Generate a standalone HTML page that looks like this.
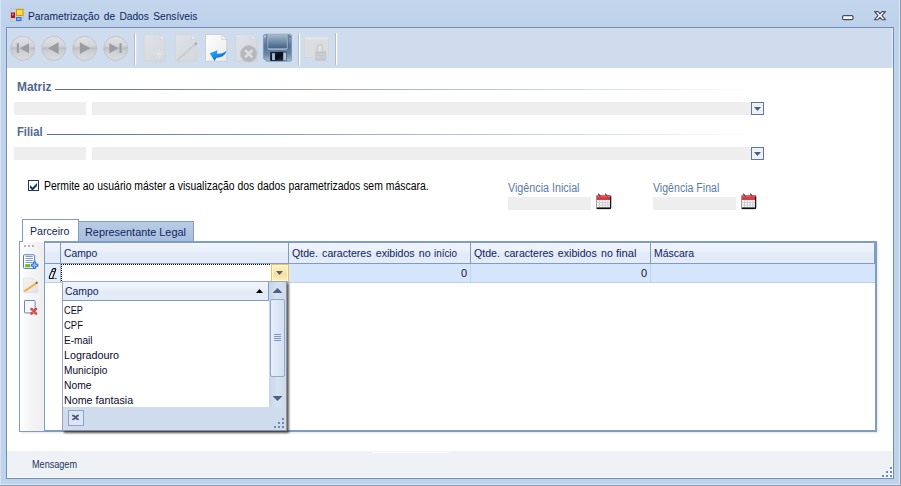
<!DOCTYPE html>
<html>
<head>
<meta charset="utf-8">
<title>Parametrização de Dados Sensíveis</title>
<style>
*{box-sizing:border-box;margin:0;padding:0}
html,body{width:901px;height:486px;overflow:hidden;background:#bfd3eb}
body{font-family:"Liberation Sans",sans-serif;font-size:11px;color:#000;position:relative}
.abs{position:absolute}
.t{position:absolute;white-space:nowrap;line-height:14px;transform-origin:0 50%}
#win{position:absolute;left:0;top:0;width:901px;height:486px;background:linear-gradient(#c3d6ed 0,#bdd1ea 27px,#bfd3eb 28px)}
#edgeL{left:0;top:0;width:1px;height:486px;background:#d6e3f4}
#edgeR1{left:899px;top:0;width:1px;height:485px;background:#d9e6f5}
#edgeR2{left:900px;top:0;width:1px;height:486px;background:#8f9bab}
#edgeB1{left:0;top:484px;width:900px;height:1px;background:#d9e6f5}
#edgeB2{left:0;top:485px;width:901px;height:1px;background:#8f9bab}
#client{left:6px;top:27px;width:888px;height:452px;border:1px solid #6f8db6;background:#fff}
#toolbar{left:7px;top:28px;width:886px;height:40px;background:#cfdced}
#status{left:7px;top:451px;width:886px;height:27px;background:#eef1f5}
.fld{position:absolute;background:#eeeeee;height:13px}
.cbtn{position:absolute;width:13px;height:13px;border:1px solid #5f7898;background:#eef2f7}
.cbtn:after{content:"";position:absolute;left:2px;top:4px;width:7px;height:4px;background:#4a5f83;clip-path:polygon(0 0,100% 0,50% 100%)}
.hline{position:absolute;height:1px;background:linear-gradient(90deg,#586e93 0,#ffffff 100%)}
.grp{font-weight:bold;font-size:12px;color:#51688f}
.hdr{position:absolute;top:243px;height:20px;background:linear-gradient(#f1f5fc 0,#e9eff9 45%,#e2eaf7 55%,#e4ecf8 100%);border-right:1px solid #7f9cc4}
.cell{position:absolute;top:264px;height:18px;background:#d4e5fc;border-right:1px solid #c3d5ee}
.item{left:64px;color:#0a0a2a;font-size:11px}
.h{font-size:11px;color:#0e2560}
/*FIT*/
#title{left:28.30px !important;transform:scaleX(0.9270)}
#chk{left:43.90px !important;transform:scaleX(0.8684)}
#vi{left:507.50px !important;transform:scaleX(0.8957)}
#vf{left:652.70px !important;transform:scaleX(0.8820)}
#gm{left:17.00px !important;transform:scaleX(0.9950)}
#gf{left:17.00px !important;transform:scaleX(0.9326)}
#msg{left:32.00px !important;transform:scaleX(0.9097)}
#h1{left:63.60px !important;transform:scaleX(0.9389)}
#h2{left:291.50px !important;transform:scaleX(0.9630)}
#h2b{left:433.80px !important;transform:scaleX(0.8954)}
#h3{left:473.50px !important;transform:scaleX(0.9644)}
#h3b{left:615.80px !important;transform:scaleX(1.0155)}
#h4{left:653.50px !important;transform:scaleX(0.9481)}
#tab1{left:30.10px !important;transform:scaleX(0.9617)}
#tab2{left:85.00px !important;transform:scaleX(0.9879)}
#it0{left:64.20px !important;transform:scaleX(0.8354)}
#it1{left:64.20px !important;transform:scaleX(0.8591)}
#it2{left:64.20px !important;transform:scaleX(0.9175)}
#it3{left:64.20px !important;transform:scaleX(0.9790)}
#it4{left:64.20px !important;transform:scaleX(0.9197)}
#it5{left:64.20px !important;transform:scaleX(0.9372)}
#it6{left:64.20px !important;transform:scaleX(0.9741)}
#ph{left:65.30px !important;transform:scaleX(0.9473)}
/*ENDFIT*/
</style>
</head>
<body>
<div id="win"></div>
<div class="abs" id="edgeL"></div>
<div class="abs" id="edgeR1"></div>
<div class="abs" id="edgeR2"></div>
<div class="abs" id="edgeB1"></div>
<div class="abs" id="edgeB2"></div>

<!-- title bar -->
<svg class="abs" style="left:10px;top:8px" width="14" height="14" viewBox="0 0 14 14">
  <rect x="0.5" y="0.5" width="13" height="13" fill="none" stroke="#c3c6cc"/>
  <path d="M5.5 0.5V13.5M0.5 9.5H13.5" stroke="#c9ccd3" fill="none"/>
  <rect x="1" y="4.5" width="4" height="5.5" fill="#b3110b"/>
  <rect x="2" y="5.5" width="1.5" height="2" fill="#f08a80"/>
  <rect x="6" y="1" width="7.5" height="7" fill="#d89a00"/>
  <rect x="7" y="2" width="5.5" height="5" fill="#ffd84a"/>
  <rect x="6" y="9" width="5.5" height="4" fill="#2f6fdc"/>
  <rect x="7" y="10" width="3.5" height="2" fill="#7fb0ff"/>
</svg>
<div class="t" id="title" style="left:28px;top:9px;font-size:11px;word-spacing:1.6px;color:#0c2560">Parametrização de Dados Sensíveis</div>
<!-- min / close -->
<svg class="abs" style="left:841px;top:14px" width="14" height="8" viewBox="0 0 14 8">
  <rect x="1.6" y="1.6" width="10.4" height="4" rx="1.2" fill="#fff" stroke="#454a60" stroke-width="1.2"/>
</svg>
<svg class="abs" style="left:873.5px;top:11px" width="12" height="9.5" viewBox="0 0 12 9.5">
  <path d="M0.6 0.6H4L6 2.9 8 0.6h3.4L7.9 4.6l3.5 4.1H8L6 6.4 4 8.7H0.6L4.1 4.6z" fill="#fff" stroke="#454a60" stroke-width="1.1" stroke-linejoin="round"/>
</svg>
<div class="abs" style="left:7px;top:28px;width:1px;height:1px;background:#fff;z-index:3"></div>
<div class="abs" id="client"></div>
<div class="abs" id="toolbar"></div>
<div class="abs" id="status"></div>
<div class="abs" style="left:372px;top:452px;width:77px;height:1px;background:#fff"></div>
<div class="abs" style="left:892px;top:28px;width:1px;height:40px;background:#e6edf7"></div>
<div class="abs" style="left:892px;top:451px;width:1px;height:27px;background:#fbfcfd"></div>
<div class="abs" style="left:7px;top:477px;width:886px;height:1px;background:#fbfcfd"></div>
<div class="t" style="left:32px;top:457.5px;font-size:10px;color:#20365f" id="msg">Mensagem</div>
<!-- status grip -->
<svg class="abs" style="left:882px;top:467px" width="10" height="10" viewBox="0 0 10 10" fill="#6e8bb5">
  <rect x="8" y="0" width="2" height="2"/><rect x="4" y="4" width="2" height="2"/><rect x="8" y="4" width="2" height="2"/>
  <rect x="0" y="8" width="2" height="2"/><rect x="4" y="8" width="2" height="2"/><rect x="8" y="8" width="2" height="2"/>
</svg>

<!-- TOOLBAR ICONS -->
<svg id="tb" class="abs" style="left:0;top:28px" width="400" height="40" viewBox="0 0 400 40">
<defs>
<linearGradient id="cg" x1="0" y1="0" x2="0" y2="1"><stop offset="0" stop-color="#dfe1e5"/><stop offset="0.38" stop-color="#d4d6da"/><stop offset="0.5" stop-color="#bfc2c7"/><stop offset="0.62" stop-color="#cbced2"/><stop offset="1" stop-color="#dcdee1"/></linearGradient>
<linearGradient id="cg2" x1="0" y1="0" x2="0" y2="1"><stop offset="0" stop-color="#c6c9ce"/><stop offset="1" stop-color="#dcdee1"/></linearGradient>
<linearGradient id="band" x1="0" y1="0" x2="1" y2="0"><stop offset="0" stop-color="#b4b7bc"/><stop offset="0.5" stop-color="#c9ccd0" stop-opacity="0.3"/><stop offset="1" stop-color="#b4b7bc"/></linearGradient>
<linearGradient id="dg" x1="0" y1="0" x2="1" y2="1"><stop offset="0" stop-color="#dfe2e6"/><stop offset="1" stop-color="#d3d6db"/></linearGradient>
<linearGradient id="wg" x1="0" y1="0" x2="1" y2="1"><stop offset="0" stop-color="#ffffff"/><stop offset="1" stop-color="#e9eaec"/></linearGradient>
<linearGradient id="fl" x1="0" y1="0" x2="0" y2="1"><stop offset="0" stop-color="#93abc2"/><stop offset="0.45" stop-color="#56749a"/><stop offset="0.72" stop-color="#6685a4"/><stop offset="1" stop-color="#a3b8cc"/></linearGradient>
<linearGradient id="fl2" x1="0" y1="0" x2="0" y2="1"><stop offset="0" stop-color="#a9bccf"/><stop offset="0.45" stop-color="#7693af"/><stop offset="0.9" stop-color="#48668a"/><stop offset="1" stop-color="#5a7897"/></linearGradient>
<linearGradient id="arr" x1="0" y1="0" x2="0.800" y2="1"><stop offset="0" stop-color="#2cb2fb"/><stop offset="0.45" stop-color="#1a8ff0"/><stop offset="1" stop-color="#0a55be"/></linearGradient>
<linearGradient id="sh" x1="0" y1="0" x2="1" y2="1"><stop offset="0" stop-color="#1a2c44"/><stop offset="0.5" stop-color="#050a12"/><stop offset="1" stop-color="#1f3a58"/></linearGradient>
</defs>
<g transform="translate(22.7,20.3)">
<circle r="12" fill="url(#cg)" stroke="#bcc1c9" stroke-width="0.9"/>
<rect x="-11.8" y="-0.7" width="23.6" height="1.4" fill="url(#band)" opacity="0.6"/>
<g fill="#999ca1"><rect x="-5.9" y="-5" width="2.1" height="9.6"/><path d="M-2.7 0L6.3 -5V5Z"/></g></g><g transform="translate(53.7,20.3)">
<circle r="12" fill="url(#cg)" stroke="#bcc1c9" stroke-width="0.9"/>
<rect x="-11.8" y="-0.7" width="23.6" height="1.4" fill="url(#band)" opacity="0.6"/>
<g fill="#999ca1"><path d="M-5.7 0L4.9 -6.1V5.8Z"/></g></g><g transform="translate(84.7,20.3)">
<circle r="12" fill="url(#cg)" stroke="#bcc1c9" stroke-width="0.9"/>
<rect x="-11.8" y="-0.7" width="23.6" height="1.4" fill="url(#band)" opacity="0.6"/>
<g fill="#999ca1"><path d="M5.7 0L-4.9 -6.1V5.8Z"/></g></g><g transform="translate(115.7,20.3)">
<circle r="12" fill="url(#cg)" stroke="#bcc1c9" stroke-width="0.9"/>
<rect x="-11.8" y="-0.7" width="23.6" height="1.4" fill="url(#band)" opacity="0.6"/>
<g fill="#999ca1"><rect x="3.8" y="-5" width="2.1" height="9.6"/><path d="M2.7 0L-6.3 -5V5Z"/></g></g>
<rect x="134" y="5.300" width="1" height="31.4" fill="#b7bcc6"/><rect x="135" y="5.300" width="1.2" height="31.4" fill="#fdfdfe"/>
<path d="M144 6.5h16.300l5 5V33.300h-21.300z" fill="url(#dg)" stroke="#cfd3d9" stroke-width="0.8"/><path d="M160.3 6.5v5h5z" fill="#e6e8eb" stroke="#cfd3d9" stroke-width="0.6"/>
<path d="M155.5 22.5l7 7m-7 0l7-7m-8.5 3.5h10m-5-5v10" stroke="#e3e5e9" stroke-width="0.9" fill="none" opacity="0.9"/>
<path d="M175.3 6.5h16.300l5 5V33.300h-21.300z" fill="url(#dg)" stroke="#cfd3d9" stroke-width="0.8"/><path d="M191.6 6.5v5h5z" fill="#e6e8eb" stroke="#cfd3d9" stroke-width="0.6"/>
<path d="M176.8 31.6L194.6 15.6l1.2 1.3L178.2 32.2z" fill="#c9ccd1" stroke="#c6c9ce" stroke-width="0.4"/>
<path d="M194.4 15.8l1.6-1.5 1.3 1.4-1.5 1.5z" fill="#9fa2a8"/>
<path d="M205.5 6.5h16.300l5 5V33.300h-21.300z" fill="url(#wg)" stroke="#c5c8ce" stroke-width="0.8"/><path d="M221.8 6.5v5h5z" fill="#f6f6f7" stroke="#c5c8ce" stroke-width="0.6"/>
<path d="M209.800 25.300L217.400 22.200L217 25.700C220.500 26.200 224 25 226.400 22.800C226 26.500 222.500 29.500 216.500 29.800L214.500 32.900Z" fill="url(#arr)"/>
<path d="M235.5 6.5h16.300l5 5V33.300h-21.300z" fill="url(#dg)" stroke="#cfd3d9" stroke-width="0.8"/><path d="M251.8 6.5v5h5z" fill="#e6e8eb" stroke="#cfd3d9" stroke-width="0.6"/>
<circle cx="248.700" cy="25.800" r="8.300" fill="#b4b7bc" stroke="#c4c7cc" stroke-width="0.8"/>
<path d="M245.100 22.200l7.200 7.200m0-7.200l-7.200 7.200" stroke="#dcdee1" stroke-width="2.5" fill="none"/>
<!-- floppy -->
<path d="M263.4 8q0-1.8 1.8-1.8h24.6q1.8 0 1.8 1.8v23.6q0 1.8-1.8 1.8h-23.4l-3-3z" fill="url(#fl)" stroke="#7590ad" stroke-width="0.6"/>
<rect x="267.6" y="6.3" width="19.8" height="14.6" fill="url(#fl2)"/>
<path d="M267.6 6.3v13q0 1.8 1.8 1.8h16.2q1.8 0 1.8-1.8v-13" fill="none" stroke="#c9d6e3" stroke-width="1"/>
<path d="M267 6.3v14M288 6.3v14" stroke="#46627f" stroke-width="0.8" fill="none"/>
<rect x="270.2" y="23.8" width="16.3" height="9" fill="url(#sh)"/>
<rect x="272" y="25.2" width="3" height="6.8" fill="#9fb6ce"/><rect x="283.2" y="24.4" width="3" height="8" fill="#b3c4d6"/>
<rect x="289.3" y="8" width="1.4" height="1.6" fill="#4f6c8b"/><rect x="264.4" y="8" width="1.4" height="1.2" fill="#dfe7ef"/>
<rect x="298" y="5.300" width="1" height="31.4" fill="#b7bcc6"/><rect x="299" y="5.300" width="1.2" height="31.4" fill="#fdfdfe"/>
<!-- lock -->
<rect x="304.5" y="9.2" width="24" height="20.4" fill="#dbdde1" stroke="#d2d5da" stroke-width="0.6"/>
<rect x="304.5" y="9.2" width="24" height="2.2" fill="#e4e6e9"/>
<path d="M317.4 24.5V19.4a2.5 2.5 0 0 1 5 0V24.5" fill="#e4e5e8" stroke="#c9ccd0" stroke-width="1.7"/>
<path d="M315.2 24.2q0-.8.8-.8h9.3q.8 0 .8.8v7.3q0 .8-.8 1.100l-4.600.5-4.700-.5q-.8-.3-.8-1.100z" fill="#c4c7cb"/>
<rect x="315.200" y="23.500" width="10.900" height="9" rx="1" fill="#c4c7cb"/>
<rect x="315.600" y="25.800" width="10.100" height="0.900" fill="#d2d4d8"/><rect x="315.600" y="28.600" width="10.100" height="0.900" fill="#d2d4d8"/>
<rect x="335" y="5.300" width="1" height="31.4" fill="#b7bcc6"/><rect x="336" y="5.300" width="1.2" height="31.4" fill="#fdfdfe"/>
</svg>

<!-- Matriz / Filial groups -->
<div class="t grp" id="gm" style="left:17px;top:80px">Matriz</div>
<div class="hline" style="left:55px;top:89px;width:705px"></div>
<div class="fld" style="left:14px;top:102px;width:72px"></div>
<div class="fld" style="left:92px;top:102px;width:659px"></div>
<div class="cbtn" style="left:751px;top:102px"></div>

<div class="t grp" id="gf" style="left:17px;top:125px">Filial</div>
<div class="hline" style="left:47px;top:134px;width:713px"></div>
<div class="fld" style="left:14px;top:147px;width:72px"></div>
<div class="fld" style="left:92px;top:147px;width:659px"></div>
<div class="cbtn" style="left:751px;top:147px"></div>

<!-- checkbox -->
<svg class="abs" style="left:28px;top:180px" width="11" height="11" viewBox="0 0 11 11">
  <rect x="0.5" y="0.5" width="10" height="10" fill="#fff" stroke="#1c3664"/>
  <path d="M2 5L4.500 7.500L9 3V6L4.500 10.500L2 8Z" fill="#1c3664"/>
</svg>
<div class="t" id="chk" style="left:44px;top:179px;font-size:12px">Permite ao usuário máster a visualização dos dados parametrizados sem máscara.</div>

<!-- dates -->
<div class="t" id="vi" style="left:508px;top:181px;font-size:12px;color:#5c7ba8">Vigência Inicial</div>
<div class="fld" style="left:508px;top:197px;width:83px"></div>
<div class="t" id="vf" style="left:653px;top:181px;font-size:12px;color:#5c7ba8">Vigência Final</div>
<div class="fld" style="left:653px;top:197px;width:83px"></div>
<svg class="abs cal" style="left:596px;top:193px" width="16" height="17" viewBox="0 0 16 17">
  <rect x="0.4" y="2.4" width="14.6" height="13.4" rx="1" fill="#fff" stroke="#777" stroke-width="0.8"/>
  <path d="M0.8 2.4h13.8v4.7H0.8z" fill="#d63c40"/>
  <path d="M0.8 2.6h13.8v1.2H0.8z" fill="#e9686b"/>
  <path d="M3.5 7.3v7M6.3 7.3v7M9.1 7.3v7M11.9 7.3v7M1 9.7h13M1 12.1h13" stroke="#c3c6cb" stroke-width="0.9"/>
  <path d="M0.8 15.2h14" stroke="#0c0c0c" stroke-width="1.6"/>
  <path d="M14.5 3.4v12" stroke="#1a1a1a" stroke-width="1.1"/>
  <path d="M2.2 0.6l2.2 2.9M9.2 0.6l2.2 2.9" stroke="#3f4a55" stroke-width="1.2"/>
</svg>
<svg class="abs cal" style="left:741px;top:193px" width="16" height="17" viewBox="0 0 16 17">
  <rect x="0.4" y="2.4" width="14.6" height="13.4" rx="1" fill="#fff" stroke="#777" stroke-width="0.8"/>
  <path d="M0.8 2.4h13.8v4.7H0.8z" fill="#d63c40"/>
  <path d="M0.8 2.6h13.8v1.2H0.8z" fill="#e9686b"/>
  <path d="M3.5 7.3v7M6.3 7.3v7M9.1 7.3v7M11.9 7.3v7M1 9.7h13M1 12.1h13" stroke="#c3c6cb" stroke-width="0.9"/>
  <path d="M0.8 15.2h14" stroke="#0c0c0c" stroke-width="1.6"/>
  <path d="M14.5 3.4v12" stroke="#1a1a1a" stroke-width="1.1"/>
  <path d="M2.2 0.6l2.2 2.9M9.2 0.6l2.2 2.9" stroke="#3f4a55" stroke-width="1.2"/>
</svg>

<!-- TABS + GRID -->
<div id="tabs">
<!-- frame -->
<div class="abs" style="left:19px;top:241px;width:858px;height:191px;border:1px solid #7f9cc4;background:#fff"></div>
<!-- soft shadow -->
<div class="abs" style="left:21px;top:432px;width:857px;height:2px;background:linear-gradient(#e9ebee,#f8f9fa)"></div>
<div class="abs" style="left:877px;top:243px;width:2px;height:190px;background:linear-gradient(90deg,#e9ebee,#f8f9fa)"></div>
<!-- tab 2 -->
<div class="abs" style="left:78px;top:221px;width:116px;height:21px;border:1px solid #7f9cc4;background:linear-gradient(#b9cce5,#a7bedc)"></div>
<div class="t" id="tab2" style="left:85px;top:225px;font-size:11px;color:#0e2560">Representante Legal</div>
<!-- tab 1 -->
<div class="abs" style="left:22px;top:219px;width:57px;height:23px;border:1px solid #7f9cc4;border-bottom:none;background:#fff"></div>
<div class="t" id="tab1" style="left:30px;top:224px;font-size:11px;color:#0e2560">Parceiro</div>
<!-- left tool panel -->
<div class="abs" style="left:20px;top:242px;width:24px;height:189px;background:linear-gradient(90deg,#ffffff 0,#f6f6f6 40%,#eeeeee 100%)"></div>
<div class="abs" style="left:24px;top:245px;width:2px;height:2px;background:#b5b5b5;box-shadow:4px 0 #b5b5b5,8px 0 #b5b5b5"></div>
<!-- grid -->
<div class="abs" style="left:44px;top:241px;width:833px;height:191px;border:1px solid #7f9cc4;border-top-width:2px;border-right-width:2px;border-bottom-width:2px;background:#fff"></div>
<div class="hdr" style="left:45px;width:16px"></div>
<div class="hdr" style="left:61px;width:228px"></div>
<div class="hdr" style="left:289px;width:182px"></div>
<div class="hdr" style="left:471px;width:180px"></div>
<div class="hdr" style="left:651px;width:224px"></div>
<div class="abs" style="left:45px;top:263px;width:830px;height:1px;background:#7f9cc4"></div>
<div class="t h" id="h1" style="left:64px;top:246px">Campo</div>
<div class="t h" id="h2" style="left:292px;top:246px;word-spacing:1.3px">Qtde. caracteres exibidos no</div><div class="t h" id="h2b" style="left:434px;top:246px">início</div>
<div class="t h" id="h3" style="left:474px;top:246px;word-spacing:1.3px">Qtde. caracteres exibidos no</div><div class="t h" id="h3b" style="left:616px;top:246px">final</div>
<div class="t h" id="h4" style="left:654px;top:246px">Máscara</div>
<!-- row -->
<div class="cell" style="left:45px;width:16px;background:#e4edfa;border-right:1px solid #9db5d8"></div>
<div class="cell" style="left:61px;width:228px;background:#fff;border:none"></div>
<div class="abs" style="left:61px;top:264px;width:210px;height:1px;background:repeating-linear-gradient(90deg,#000 0 1px,#fff 1px 2px)"></div>
<div class="abs" style="left:61px;top:264px;width:1px;height:18px;background:repeating-linear-gradient(180deg,#000 0 1px,#fff 1px 2px)"></div>
<div class="cell" style="left:289px;width:182px"></div>
<div class="cell" style="left:471px;width:180px"></div>
<div class="cell" style="left:651px;width:224px;border-right:none"></div>
<div class="abs" style="left:45px;top:282px;width:830px;height:1px;background:#bcd0ec"></div>
<div class="t" style="left:461px;top:266px;font-size:11px;color:#1b1030" id="z1">0</div>
<div class="t" style="left:641px;top:266px;font-size:11px;color:#1b1030" id="z2">0</div>
<!-- left panel icons -->
<svg class="abs" style="left:20px;top:250px" width="24" height="70" viewBox="0 0 24 70">
<defs><linearGradient id="pg" x1="0" y1="0" x2="1" y2="1"><stop offset="0" stop-color="#f6f6f6"/><stop offset="1" stop-color="#e0e0e0"/></linearGradient></defs>
<rect x="3.5" y="4.8" width="11.2" height="13.6" rx="0.8" fill="#fdfeff" stroke="#5277bb" stroke-width="1"/>
<path d="M5.5 6.5h7.3M5.5 8.5h7.3M5.5 10.5h7.3M5.5 12.5h7.3" stroke="#7f9cd2" stroke-width="1"/>
<rect x="5.2" y="14.2" width="5" height="3" fill="#6fb51d"/>
<path d="M13.500 11.900h2.200v2.200h2.200v2.200h-2.200v2.200h-2.200v-2.200h-2.200v-2.200h2.200z" fill="#8ec0f2" stroke="#2f6fc4" stroke-width="1" stroke-linejoin="round"/>
<path d="M3.6 28.2h9.5l4.5 4.2v10.2h-14z" fill="url(#pg)" stroke="#dcdcdc" stroke-width="0.6"/>
<path d="M13.1 28.2v4.2h4.500z" fill="#f5f5f5" stroke="#dadada" stroke-width="0.5"/>
<path d="M4.3 41.2L16.2 33.2" stroke="#f2a22c" stroke-width="1.7"/>
<path d="M4.3 41.2L16.2 33.2" stroke="#fbd38a" stroke-width="0.5" transform="translate(-0.3,-0.5)"/>
<path d="M16 33.3l1.5-1" stroke="#555" stroke-width="1.7"/>
<rect x="4.5" y="50.5" width="10.6" height="12.4" rx="0.6" fill="#f5f7fb" stroke="#6f87b7" stroke-width="1"/>
<path d="M11.400 58.900l4.700 4.700m0-4.700l-4.700 4.700" stroke="#c62a25" stroke-width="2.3" stroke-linecap="round"/>
<path d="M11.400 58.900l4.700 4.700m0-4.700l-4.700 4.700" stroke="#ee6057" stroke-width="1.1" stroke-linecap="round"/>
</svg>
<!-- row indicator pencil -->
<svg class="abs" style="left:47px;top:267px" width="12" height="13" viewBox="0 0 12 13">
<path d="M6.3 1.6h1.9q.8.2.5 1.2L5.9 10.3 5.5 11.4H2.4V9.6L5.6 2.2z" fill="none" stroke="#0a0a0a" stroke-width="1.05" stroke-linejoin="round"/>
<path d="M5.2 4.2l2.8.9" stroke="#0a0a0a" stroke-width="1"/>
<rect x="6.2" y="10.9" width="1.1" height="1.1" fill="#0a0a0a"/><rect x="8.3" y="10.9" width="1.1" height="1.1" fill="#0a0a0a"/>
</svg>
<!-- yellow dropdown btn -->
<div class="abs" style="left:271px;top:264px;width:18px;height:18px;border:1px solid #efc15c;background:linear-gradient(#fdf2cb 0,#fbe6a6 50%,#f9df94 55%,#fdefc0 100%);box-shadow:inset 0 0 0 1px #fef8df"></div>
<div class="abs" style="left:276px;top:271px;width:7px;height:4px;background:#4d5f83;clip-path:polygon(0 0,100% 0,50% 100%)"></div>
</div>
<!-- POPUP -->
<div id="popup">
<div class="abs" style="left:62px;top:281px;width:225px;height:150px;background:#fff;border:1px solid #9ea6b2;border-right-color:#8d939c;border-bottom-color:#8d939c;box-shadow:2px 2px 2px rgba(40,40,40,.75)"></div>
<div class="abs" style="left:63px;top:282px;width:206px;height:19px;background:linear-gradient(#f1f5fc 0,#e9eff9 45%,#e2eaf7 55%,#e4ecf8 100%);border-right:1px solid #7f9cc4;border-bottom:1px solid #7f9cc4"></div>
<div class="t h" id="ph" style="left:66px;top:284px">Campo</div>
<div class="abs" style="left:256px;top:289px;width:7px;height:4px;background:#000;clip-path:polygon(0 100%,100% 100%,50% 0)"></div>
<!-- scrollbar -->
<div class="abs" style="left:269px;top:282px;width:17px;height:125px;background:linear-gradient(90deg,#c7d6ea 0,#d7e2f1 50%,#cddaec 100%)"></div>
<div class="abs" style="left:272.500px;top:288px;width:10px;height:5px;background:#4d5f83;clip-path:polygon(0 100%,100% 100%,50% 0)"></div>
<div class="abs" style="left:272.500px;top:396px;width:10px;height:5px;background:#4d5f83;clip-path:polygon(0 0,100% 0,50% 100%)"></div>
<div class="abs" style="left:270px;top:299px;width:15px;height:78px;border:1px solid #8fa8cc;border-radius:2px;background:linear-gradient(90deg,#e6eefa 0,#d3e0f2 100%)"></div>
<div class="abs" style="left:274px;top:334px;width:7px;height:1px;background:#7f98bf;box-shadow:0 2px #7f98bf,0 4px #7f98bf,0 6px #7f98bf"></div>
<div class="t item" id="it0" style="top:303px">CEP</div>
<div class="t item" id="it1" style="top:318px">CPF</div>
<div class="t item" id="it2" style="top:333px">E-mail</div>
<div class="t item" id="it3" style="top:348px">Logradouro</div>
<div class="t item" id="it4" style="top:363px">Município</div>
<div class="t item" id="it5" style="top:378px">Nome</div>
<div class="t item" id="it6" style="top:393px">Nome fantasia</div>

<!-- footer -->
<div class="abs" style="left:63px;top:407px;width:223px;height:23px;background:#cfdced"></div>
<div class="abs" style="left:68px;top:410px;width:16px;height:16px;border:1px solid #8fa5c8;background:#dbe5f3"></div>
<svg class="abs" style="left:71px;top:414px" width="9" height="7" viewBox="0 0 9 7"><path d="M1.2 1.3C2.8 1.3 3.700 2.300 4.500 3.400 5.300 4.500 6.200 5.500 7.800 5.500M1.2 5.500C2.800 5.500 3.700 4.500 4.500 3.400 5.300 2.300 6.200 1.300 7.800 1.300" stroke="#43527a" stroke-width="1.700" fill="none"/></svg>
<svg class="abs" style="left:274px;top:418px" width="10" height="10" viewBox="0 0 10 10" fill="#6e8bb5">
  <rect x="8" y="0" width="2" height="2"/><rect x="4" y="4" width="2" height="2"/><rect x="8" y="4" width="2" height="2"/>
  <rect x="0" y="8" width="2" height="2"/><rect x="4" y="8" width="2" height="2"/><rect x="8" y="8" width="2" height="2"/>
</svg>
</div>

</body>
</html>
